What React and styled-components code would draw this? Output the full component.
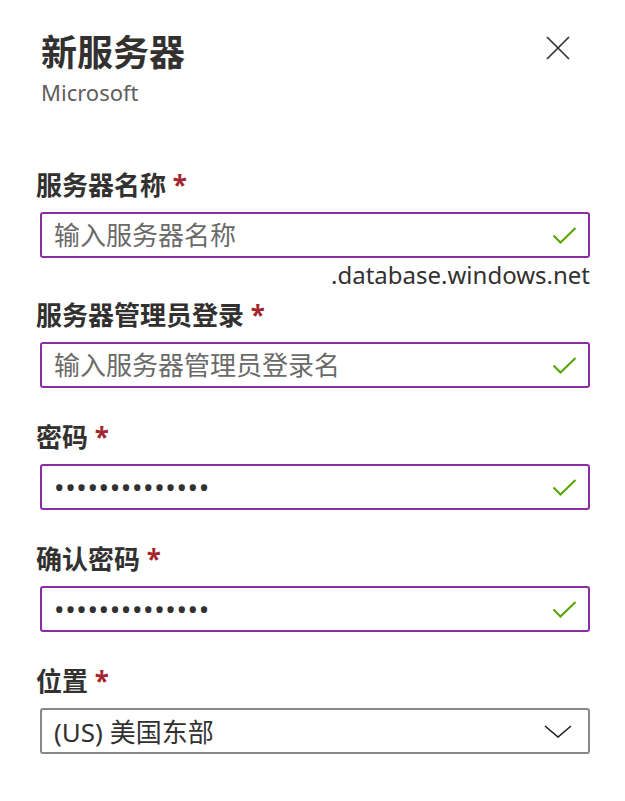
import React from 'react'
import styled, { createGlobalStyle } from 'styled-components'

const GlobalStyle = createGlobalStyle`
  html, body {
    margin: 0;
    padding: 0;
    background: #ffffff;
  }
  body {
    font-family: "Noto Sans", "Noto Sans CJK SC", sans-serif;
    color: #323130;
  }
`

const fields = [
  { label: '服务器名称', placeholder: '输入服务器名称', hint: '.database.windows.net' },
  { label: '服务器管理员登录', placeholder: '输入服务器管理员登录名' },
  { label: '密码', password: true },
  { label: '确认密码', password: true },
]

const CheckIcon = () => (
  <svg width='25' height='17' viewBox='0 0 25 17' fill='none'>
    <path d='M1.5 8.5 L8.5 15.5 L23.5 1' stroke='#57a300' strokeWidth='2' />
  </svg>
)

const ChevronIcon = () => (
  <svg width='28' height='13' viewBox='0 0 28 13' fill='none'>
    <path d='M1 1 L14 12 L27 1' stroke='#201f1e' strokeWidth='1.6' />
  </svg>
)

const CloseIcon = () => (
  <svg width='24' height='24' viewBox='0 0 24 24' fill='none'>
    <path d='M1 1 L23 23 M23 1 L1 23' stroke='#323130' strokeWidth='1.7' />
  </svg>
)

const App = () => {
  return (
    <Page>
      <GlobalStyle />
      <Header>
        <div>
          <Title>新服务器</Title>
          <Publisher>Microsoft</Publisher>
        </div>
        <CloseButton aria-label='关闭'>
          <CloseIcon />
        </CloseButton>
      </Header>
      {fields.map((f) => (
        <Field key={f.label} $tight={!!f.hint}>
          <Label>
            {f.label} <Required>*</Required>
          </Label>
          <InputBox>
            {f.password ? (
              <Input type='password' defaultValue='abcdefghijklmn' $dots />
            ) : (
              <Input placeholder={f.placeholder} />
            )}
            <CheckIcon />
          </InputBox>
          {f.hint && <Hint>{f.hint}</Hint>}
        </Field>
      ))}
      <Field>
        <Label>
          位置 <Required>*</Required>
        </Label>
        <SelectBox>
          <SelectValue>(US) 美国东部</SelectValue>
          <ChevronIcon />
        </SelectBox>
      </Field>
    </Page>
  )
}

export default App

const Page = styled.div`
  width: 625px;
  box-sizing: border-box;
  padding: 30px 35px 0 36px;
`
const Header = styled.div`
  display: flex;
  justify-content: space-between;
  align-items: flex-start;
  padding-left: 5px;
  margin-bottom: 60px;
`
const Title = styled.h1`
  margin: 0;
  font-size: 36px;
  font-weight: 700;
  line-height: 46px;
  color: #323130;
`
const Publisher = styled.div`
  font-size: 22px;
  line-height: 32px;
  color: #605e5c;
`
const CloseButton = styled.button`
  border: none;
  background: none;
  padding: 0;
  margin: 6px 20px 0 0;
  display: flex;
  cursor: pointer;
`
const Field = styled.div`
  display: flex;
  flex-direction: column;
  padding-bottom: ${(p) => (p.$tight ? '7px' : '32px')};
`
const Label = styled.label`
  font-size: 26px;
  font-weight: 700;
  line-height: 34px;
  color: #323130;
  margin-bottom: 10px;
`
const Required = styled.span`
  color: #a4262c;
  font-weight: 700;
`
const InputBox = styled.div`
  margin-left: 4px;
  height: 46px;
  box-sizing: border-box;
  border: 2px solid #8a2ca4;
  border-radius: 3px;
  display: flex;
  align-items: center;
  padding: 0 11px 0 12px;
`
const Input = styled.input`
  flex: 1;
  min-width: 0;
  border: none;
  outline: none;
  background: transparent;
  padding: 0;
  font-family: "Noto Sans", "Noto Sans CJK SC", sans-serif;
  font-size: ${(p) => (p.$dots ? '28px' : '26px')};
  color: #323130;
  letter-spacing: ${(p) => (p.$dots ? '0.6px' : '0')};

  &::placeholder {
    color: #6b6a69;
  }
`
const Hint = styled.div`
  align-self: flex-end;
  font-size: 24px;
  line-height: 33px;
  color: #323130;
`
const SelectBox = styled.div`
  margin-left: 4px;
  height: 46px;
  box-sizing: border-box;
  border: 2px solid #8a8886;
  border-radius: 3px;
  display: flex;
  align-items: center;
  justify-content: space-between;
  padding: 0 16px 0 12px;
  cursor: pointer;
`
const SelectValue = styled.span`
  font-size: 26px;
  color: #323130;
`
